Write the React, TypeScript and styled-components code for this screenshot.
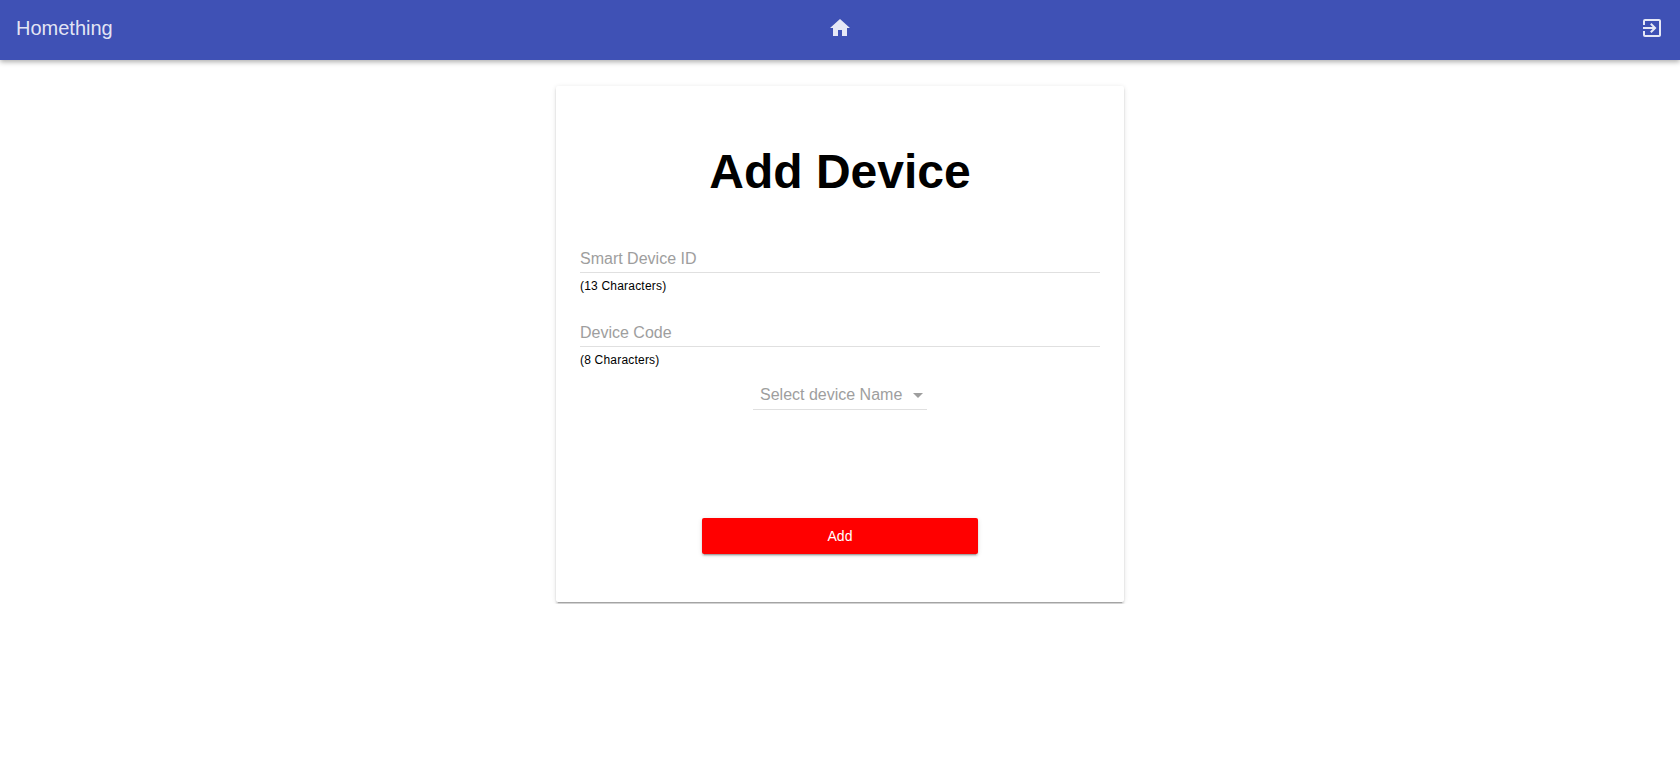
import React from "react";
import styled, { createGlobalStyle } from "styled-components";

const GlobalStyle = createGlobalStyle`
  * { box-sizing: border-box; }
  body {
    margin: 0;
    background: #fff;
    color: #000;
    font-family: Arial, "Liberation Sans", sans-serif;
    overflow: hidden;
  }
`;

const elevation = `0 3px 1px -2px rgba(0, 0, 0, 0.2), 0 2px 2px 0 rgba(0, 0, 0, 0.14),
    0 1px 5px 0 rgba(0, 0, 0, 0.12)`;

const Toolbar = styled.header`
  display: grid;
  grid-template-columns: 1fr auto 1fr;
  align-items: center;
  height: 60px;
  padding: 0 16px 4px;
  background: #3f51b5;
  color: rgba(255, 255, 255, 0.87);
  box-shadow: 0 2px 5px 0 rgba(0, 0, 0, 0.32);
`;

const Brand = styled.span`
  font-size: 20px;
  line-height: 24px;
`;

const Icon = styled.svg`
  display: block;
  width: 24px;
  height: 24px;
  fill: currentColor;
`;

const IconLink = styled.a`
  justify-self: end;
`;

const Page = styled.main`
  display: flex;
  justify-content: center;
  height: 544px;
  padding-top: 26px;
  overflow: hidden;
`;

const Card = styled.form`
  display: flex;
  flex-direction: column;
  width: 568px;
  height: 516px;
  padding: 0 24px;
  border-radius: 2px;
  background: #fff;
  box-shadow: ${elevation};
`;

const Title = styled.h1`
  margin: 58px 0 0;
  font-size: 48px;
  line-height: 56px;
  font-weight: 700;
  text-align: center;
`;

const Field = styled.label`
  display: block;
  height: 74px;
`;

const Fields = styled.div`
  margin-top: 43px;
`;

const Input = styled.input`
  display: block;
  width: 100%;
  height: 30px;
  padding: 3px 0 0;
  border: 0;
  border-bottom: 1px solid #e0e0e0;
  background: none;
  outline: 0;
  font: 16px/26px Arial, "Liberation Sans", sans-serif;
  &::placeholder {
    color: #9e9e9e;
    opacity: 1;
  }
`;

const Hint = styled.span`
  display: block;
  padding-top: 6px;
  font-size: 12px;
  line-height: 14px;
  letter-spacing: 0.2px;
`;

const Select = styled.div`
  display: flex;
  align-items: center;
  justify-content: space-between;
  align-self: center;
  width: 174px;
  height: 29px;
  margin-top: -10px;
  padding: 0 4px 0 7px;
  border-bottom: 1px solid #e0e0e0;
  color: #9e9e9e;
  font-size: 16px;
  line-height: 20px;
`;

const Caret = styled.span`
  border: 5px solid transparent;
  border-top-color: currentColor;
  border-bottom: 0;
`;

const AddButton = styled.button`
  align-self: center;
  width: 276px;
  height: 36px;
  margin-top: 108px;
  border: 0;
  border-radius: 2px;
  background: #f00;
  color: #fff;
  font: 14px/36px Arial, "Liberation Sans", sans-serif;
  padding: 0;
  box-shadow: ${elevation};
`;

export default function App() {
  return (
    <>
      <GlobalStyle />
      <Toolbar>
        <Brand>Homething</Brand>
        <Icon viewBox="0 0 24 24">
          <path d="M10 20v-6h4v6h5v-8h3L12 3 2 12h3v8z" />
        </Icon>
        <IconLink>
          <Icon viewBox="0 0 24 24">
            <path d="M10.09 15.59L11.5 17l5-5-5-5-1.41 1.41L12.67 11H3v2h9.67l-2.58 2.59zM19 3H5a2 2 0 0 0-2 2v4h2V5h14v14H5v-4H3v4a2 2 0 0 0 2 2h14c1.1 0 2-.9 2-2V5c0-1.1-.9-2-2-2z" />
          </Icon>
        </IconLink>
      </Toolbar>
      <Page>
        <Card>
          <Title>Add Device</Title>
          <Fields>
            <Field>
              <Input placeholder="Smart Device ID" />
              <Hint>(13 Characters)</Hint>
            </Field>
            <Field>
              <Input placeholder="Device Code" />
              <Hint>(8 Characters)</Hint>
            </Field>
          </Fields>
          <Select>
            <span>Select device Name</span>
            <Caret />
          </Select>
          <AddButton type="button">Add</AddButton>
        </Card>
      </Page>
    </>
  );
}
